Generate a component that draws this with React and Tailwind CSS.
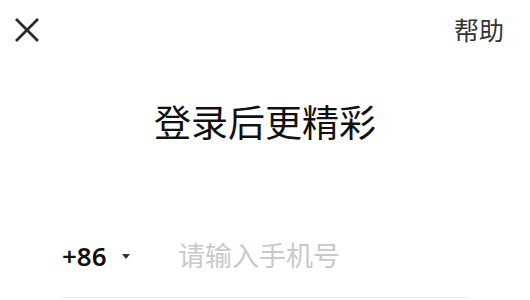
import React, { useState } from 'react';

const CloseIcon = () => (
  <svg width="24" height="24" viewBox="0 0 24 24" fill="none" stroke="#2b2b2b" strokeWidth="2.8" strokeLinecap="square">
    <path d="M2 2 L22 22 M22 2 L2 22" />
  </svg>
);

const App = () => {
  const [phone, setPhone] = useState('');

  return (
    <div className="w-[530px] h-[300px] bg-white overflow-hidden font-['Noto_Sans','Noto_Sans_CJK_SC',sans-serif]">
      <div className="flex items-center justify-between pl-[15px] pr-[26px] h-[60px]">
        <button className="flex items-center justify-center">
          <CloseIcon />
        </button>
        <span className="text-[25px] text-[#333333] leading-none">帮助</span>
      </div>

      <h1 className="mt-[41px] text-center text-[37px] leading-[44px] text-[#111111] font-normal">登录后更精彩</h1>

      <div className="mx-[62px] mt-[91px] flex items-center h-[40px]">
        <div className="flex items-center w-[116px]">
          <span className="text-[26px] font-semibold text-[#111111] leading-none">+86</span>
          <span className="ml-[15px] mt-[1px] w-0 h-0 border-x-[4.5px] border-x-transparent border-t-[5.5px] border-t-[#333333]" />
        </div>
        <input
          value={phone}
          onChange={(e) => setPhone(e.target.value)}
          placeholder="请输入手机号"
          className="flex-1 min-w-0 outline-none text-[27px] text-[#111111] placeholder:text-[#c9c9c9] bg-transparent"
        />
      </div>
      <div className="mx-[62px] mt-[21px] h-px bg-[#ececec]" />
    </div>
  );
};

export default App;
